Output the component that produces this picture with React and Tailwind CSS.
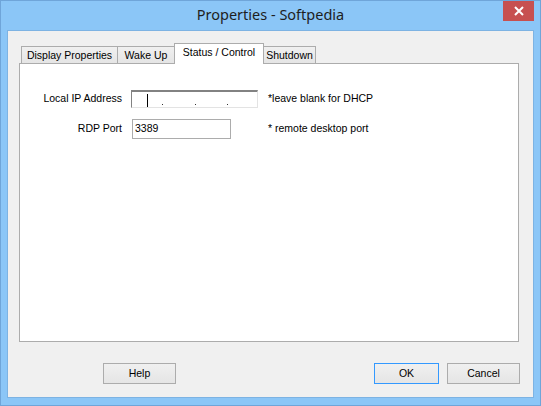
import React from 'react'

const tabs = [
  { label: 'Display Properties', w: 'w-[97px]' },
  { label: 'Wake Up', w: 'w-[58px]' },
  { label: 'Status / Control', w: 'w-[90px]', active: true },
  { label: 'Shutdown', w: 'w-[53px]' },
]

function Tab({ label, w, active, first }) {
  if (active) {
    return (
      <div className={`${w} ${first ? '' : '-ml-px'} relative z-10 -mb-px h-[21px] bg-white border border-b-0 border-[#acacac] flex justify-center pt-[1px]`}>
        {label}
      </div>
    )
  }
  return (
    <div className={`${w} ${first ? '' : '-ml-px'} h-[17px] bg-gradient-to-b from-[#f0f0f0] to-[#e5e5e5] border border-b-0 border-[#acacac] flex justify-center pt-[1px] whitespace-nowrap`}>
      {label}
    </div>
  )
}

function Button({ children, w, primary }) {
  return (
    <button
      className={`${w} h-[21px] border ${primary ? 'border-[#3399ff]' : 'border-[#acacac]'} bg-gradient-to-b from-[#f0f0f0] to-[#e5e5e5] text-black flex items-center justify-center`}
    >
      {children}
    </button>
  )
}

export default function App() {
  return (
    <div className="w-[541px] h-[406px] bg-[#8bc6f7] border border-[#6fa5d9] flex flex-col font-['Liberation_Sans',Arial,sans-serif] text-[10.5px] text-black">
      {/* title bar */}
      <div className="relative h-[29px] flex items-center justify-center">
        <span className="font-['Noto_Sans',sans-serif] text-[14.5px] text-[#1e1e1e] -mt-[1px]">Properties - Softpedia</span>
        <div className="absolute top-0 right-[6px] w-[31px] h-[20px] bg-[#c75050] flex items-center justify-center">
          <svg width="10" height="10" viewBox="0 0 10 10">
            <path d="M1 1L9 9M9 1L1 9" stroke="#fff" strokeWidth="2" />
          </svg>
        </div>
      </div>

      {/* client area */}
      <div className="mx-[6px] mb-[7px] flex-1 bg-[#f0f0f0] border border-[#7db3e3] flex flex-col">
        <div className="pl-[11px] pr-[14px] pt-[11px]">
          <div className="flex items-end h-[21px] pl-[2px]">
            {tabs.map((t, i) => (
              <Tab key={t.label} {...t} first={i === 0} />
            ))}
          </div>
          <div className="h-[279px] bg-white border border-[#acacac] pt-[26px]">
            <div className="flex items-center">
              <span className="w-[102px] text-right">Local IP Address</span>
              <div className="ml-[9px] w-[127px] h-[18px] bg-white border-t-2 border-l border-t-[#828282] border-l-[#828282] border-r border-b border-r-[#e3e3e3] border-b-[#e3e3e3] flex items-end">
                <span className="ml-[15px] w-px h-[13px] bg-black" />
                <span className="ml-[14px] w-px h-px bg-[#333] mb-[2px]" />
                <span className="ml-[32px] w-px h-px bg-[#333] mb-[2px]" />
                <span className="ml-[31px] w-px h-px bg-[#333] mb-[2px]" />
              </div>
              <span className="ml-[10px]">*leave blank for DHCP</span>
            </div>
            <div className="flex items-center mt-[11px]">
              <span className="w-[102px] text-right">RDP Port</span>
              <div className="ml-[10px] w-[99px] h-[20px] bg-white border border-[#acacac] flex items-center pl-[2px]">
                3389
              </div>
              <span className="ml-[37px]">* remote desktop port</span>
            </div>
          </div>
        </div>

        <div className="flex items-center mt-[21px] pl-[95px] pr-[13px]">
          <Button w="w-[73px]">Help</Button>
          <div className="flex-1" />
          <Button w="w-[65px]" primary>OK</Button>
          <div className="w-[8px]" />
          <Button w="w-[73px]">Cancel</Button>
        </div>
      </div>
    </div>
  )
}
